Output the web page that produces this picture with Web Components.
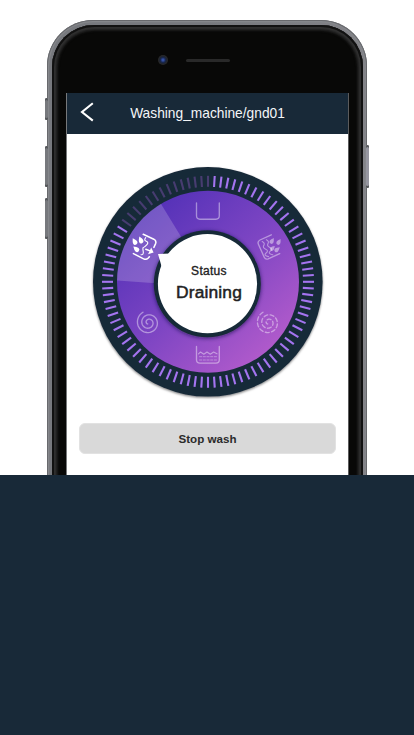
<!DOCTYPE html>
<html lang="en"><head><meta charset="utf-8"><title>Washing machine</title>
<style>html,body{margin:0;height:735px;overflow:hidden;background:#fff;font-family:"Liberation Sans",Arial,sans-serif}</style></head>
<body><wash-page></wash-page>
<script>
const make=(name,html,setup)=>customElements.define(name,class extends HTMLElement{
  constructor(){super();this.attachShadow({mode:'open'}).innerHTML=html;if(setup)setup(this.shadowRoot)}
});

make('nav-header',`<style>
:host{display:grid;grid-template-columns:40px 1fr 40px;align-items:center;height:41px;background:#182938;color:#f4f6f8;box-sizing:border-box}
svg{display:block;margin-left:13px;margin-top:-4px}
.t{text-align:center;font-size:13.75px;line-height:20px;white-space:nowrap}
</style><svg width="15" height="20" viewBox="0 0 15 20"><path d="M12.8 1.2 2 10l10.8 8.6" fill="none" stroke="#fff" stroke-width="2.1"/></svg><span class="t"><slot></slot></span><span></span>`);

make('stop-button',`<style>
:host{display:block;margin:0 12px}
button{display:block;width:100%;height:31px;border:1px solid #e2e2e2;border-radius:6px;background:#d9d9d9;color:#2b2b2b;font:bold 11.6px/27px "Liberation Sans",Arial,sans-serif;padding:0 0 1px;text-align:center}
</style><button><slot></slot></button>`);

make('status-label',`<style>
:host{display:flex;flex-direction:column;align-items:center;color:#222}
.s{font-size:12px;line-height:14px;letter-spacing:.3px;-webkit-text-stroke:.35px #222}
.v{font-size:17.4px;line-height:20px;margin-top:4px;letter-spacing:.15px;-webkit-text-stroke:.5px #222}
</style><span class="s"><slot name="label"></slot></span><span class="v"><slot name="value"></slot></span>`);

make('wash-dial',`<style>
:host{display:grid;width:240px;height:240px}
svg,.c{grid-area:1/1}
.c{justify-self:center;padding-top:102px;padding-left:2px}
svg{display:block}
</style>
<svg width="240" height="240" viewBox="88 162 240 240" fill="none">
<defs>
<linearGradient id="g" x1="145" y1="215" x2="270" y2="350" gradientUnits="userSpaceOnUse"><stop offset="0" stop-color="#5532b8"/><stop offset=".5" stop-color="#7d45c3"/><stop offset="1" stop-color="#b05acb"/></linearGradient>
<filter id="sh" x="-10%" y="-10%" width="120%" height="120%"><feDropShadow dx="0" dy="1.2" stdDeviation="1.3" flood-color="#000" flood-opacity=".5"/></filter>
<filter id="si" x="-20%" y="-20%" width="140%" height="140%"><feDropShadow dx="0" dy="1" stdDeviation="2" flood-color="#170b3c" flood-opacity=".65"/></filter>
</defs>
<circle cx="207.8" cy="281.8" r="114.8" fill="#182938" filter="url(#sh)"/>
<g id="ticks" stroke-width="2.1"></g>
<circle cx="208" cy="281.8" r="91" fill="url(#g)"/>
<path d="M117 280.6A91 91 0 0 1 160.9 203.8L205 276V286.8Z" fill="#fff" fill-opacity=".19"/>
<circle cx="207.3" cy="283.8" r="53.5" fill="#182938" filter="url(#si)"/>
<circle cx="207.5" cy="283.7" r="49.6" fill="#fff"/>
<path d="M158 254L170.5 253.5L162 268Z" fill="#fff"/>
<g stroke="#fff" stroke-opacity=".43" stroke-width="1.35" stroke-linecap="round" stroke-linejoin="round">
<path d="M196.5 203v12.8q0 3.4 3.4 3.4h16q3.4 0 3.4-3.4V203"/>
<path d="M196.5 346.5v13.3q0 3.4 3.4 3.4h16q3.4 0 3.4-3.4V346.5"/>
<path stroke-width="1.1" d="M198.5 353.8l2-1.8 3.3 2.2 3.2-2.2 3.3 2.2 3.3-2.2 3.4 1.8"/>
<path d="M199.5 356.7h17.5M199.5 360h17.5" stroke-dasharray="2.2 1.5" stroke-width=".8"/>
<g id="fill"></g>
<path id="spiral"/><path id="spiral2" stroke-dasharray="4 2.4"/>
</g>
<g id="drain"></g>
</svg><div class="c"><slot></slot></div>`,root=>{
  const R=Math.PI/180;let t='';
  for(let i=0;i<88;i++){
    const a=i*360/88,b=(a-1.6*Math.sin(4*a*R))*R,s=Math.sin(b),c=Math.cos(b);
    const dim=i===0||i>=75;
    t+=`<path stroke="${dim?'#473c70':'#a474f0'}" d="M${208+95*s} ${281.8-95*c}L${208+106*s} ${281.8-106*c}"/>`;
  }
  root.getElementById('ticks').innerHTML=t;
  const spiral=(cx,cy)=>{let d='';for(let k=0;k<=100;k++){const u=k/100,a=(242-840*u)*R,r=11.8-10.2*u;
    d+=(k?'L':'M')+(cx+r*Math.cos(a)).toFixed(2)+' '+(cy+r*Math.sin(a)).toFixed(2)}return d};
  root.getElementById('spiral').setAttribute('d',spiral(148.5,322.6));
  root.getElementById('spiral2').setAttribute('d',spiral(268.5,322.6));
  const drop=(x,y,r,s=1)=>`<path transform="translate(${x} ${y}) rotate(${r}) scale(${s})" d="M0-4.6C1.2-2.6 2.4-1 2.4.6A2.4 2.4 0 0 1-2.4.6C-2.4-1-1.2-2.6 0-4.6Z"/>`;
  root.getElementById('fill').innerHTML=`<path d="M271.3 234.8L260 240q-2.8 1.4-1.6 4.2l5.8 13q1.2 2.6 4 1.6L279.7 253.6"/><path stroke-width="1.1" d="M262.2 241.6q3 1.4 1.6 3.8t1.9 3.8 .4 3.8 2.4 3.6M266.4 239.8q3 1.4 1.6 3.8t1.9 3.8 .4 3.8 2.4 3.6"/><g fill="#fff" fill-opacity=".45" stroke="none">${drop(271.8,241.3,30,.85)}${drop(278.6,242.3,30,.85)}${drop(272.2,248.6,45,.8)}${drop(276.8,249.8,50,.85)}</g>`;
  root.getElementById('drain').innerHTML=`<g stroke="#fff" stroke-width="1.5" stroke-linecap="round" stroke-linejoin="round"><path d="M143.2 234.3l10.6 4.9q2.9 1.5 1.8 4.4l-1.7 3.8M133.4 253.6l10.2 5.2q2.6 1.3 4.4-.5l1.4-1.6"/><path stroke-width="1.1" d="M145.7 237.6q-2.2 2.7.6 3.7t.4 3.6-3.3 2.6-.2 3.7-2.2 3.5"/><path d="M145.8 249.3l5 1.8"/></g><g fill="#fff">${drop(141,240.6,-22,.95)}${drop(134.9,242,-30,.95)}${drop(136.6,249.4,-48,.95)}<path d="M151.2 247.6l2.4 5-5.6 1.7 1.4-2.8Z"/></g>`;
});

make('phone-frame',`<style>
:host{display:flex;justify-content:center;position:relative;height:475px;overflow:hidden;padding-top:20px;box-sizing:border-box}
.body{position:relative;box-sizing:border-box;width:320px;height:560px;border-radius:46px;background:linear-gradient(90deg,#77797e,#77797e 50%,#838388);box-shadow:inset 0 0 0 1px #68696d,inset 0 0 0 2.2px #85878b;padding:5px 4px 0 5px}
.glass{box-sizing:border-box;height:560px;border-radius:42px;background:#080807;box-shadow:inset 0 0 0 2px #111,inset 0 0 2px 4px #303030,inset 0 0 2px 6px #1c1c1c;padding:0 14.5px 0 14px}
.bar{height:68px;position:relative}
.cam{position:absolute;left:91.5px;top:29.5px;width:10px;height:10px;border-radius:50%;background:radial-gradient(circle,#3450a3 0 12%,#17264f 35%,#20242d 52%,#292929 70%)}
.spk{position:absolute;left:120px;top:34px;width:44px;height:3px;border-radius:2px;background:#292929}
.screen{background:#fff;height:500px;border-left:1px solid #77797b;border-right:1px solid #5b5b5c;width:281px;box-sizing:content-box}
i{position:absolute;width:3px;background:#77797d;border-radius:2px;box-shadow:inset 0 2px #55575a,inset 0 -2px #55575a}
</style><div class="body">
<i style="left:-2px;top:78px;height:22px"></i><i style="left:-2px;top:126px;height:41px"></i><i style="left:-2px;top:178px;height:41px"></i><i style="right:-2px;top:125px;height:43px;background:#9696a0"></i>
<div class="glass"><div class="bar"><span class="cam"></span><span class="spk"></span></div><div class="screen"><slot></slot></div></div></div>`);

make('wash-page',`<style>
:host{display:grid;grid-template-rows:475px 260px;width:414px;height:735px}
wash-dial{margin:28px 0 0 21px}
stop-button{margin-top:21px}
footer{background:#182938}
</style><phone-frame><nav-header>Washing_machine/gnd01</nav-header>
<wash-dial><status-label><span slot="label">Status</span><span slot="value">Draining</span></status-label></wash-dial>
<stop-button>Stop wash</stop-button></phone-frame><footer></footer>`);
</script></body></html>
